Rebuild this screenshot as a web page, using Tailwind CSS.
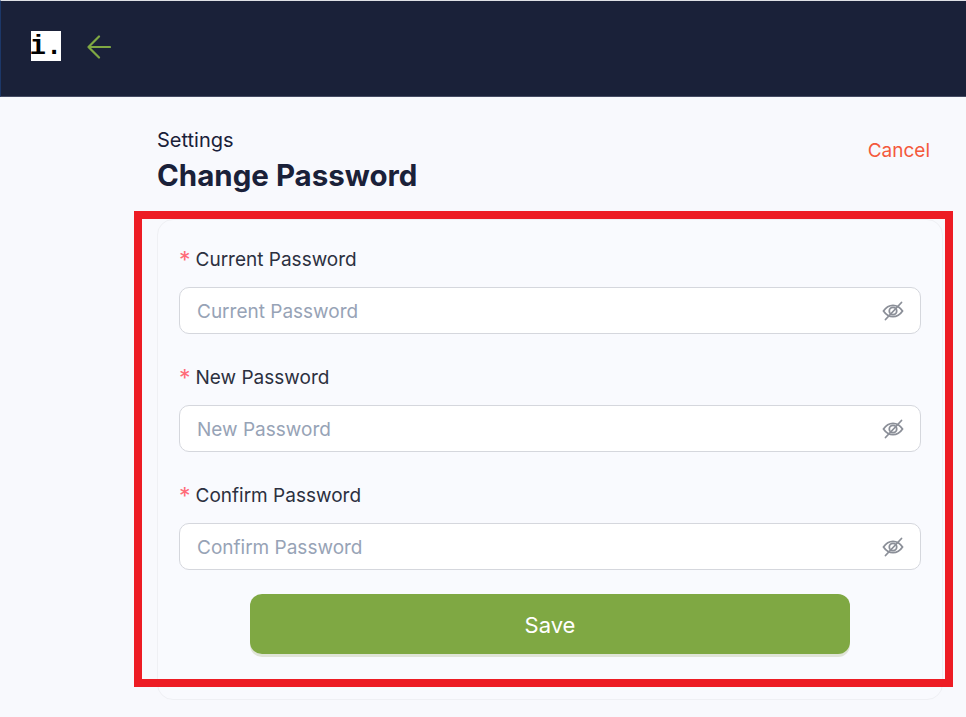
<!DOCTYPE html>
<html lang="en">
<head>
  <meta charset="UTF-8" />
  <title>Change Password</title>
  <script src="https://cdn.jsdelivr.net/npm/@tailwindcss/browser@4"></script>
</head>
<body class="relative h-[717px] w-[966px] overflow-hidden bg-[#f8f9fd] font-['Inter',sans-serif]">

  <header class="flex h-[97px] items-start border-t border-l border-b border-t-[#dfe1e6] border-l-[#1c3768] border-b-[#454b63] bg-[#1a2139] pt-[30px] pl-[30px]">
    <div class="flex h-[30px] w-[30px] items-end justify-center bg-white font-['Liberation_Mono',monospace] text-[27px] leading-[27px] font-bold text-black">i.</div>
    <svg class="mt-[4px] ml-[26px] h-6 w-6 text-[#7fa843]" viewBox="0 0 24 24" fill="none" stroke="currentColor" stroke-width="2.200" stroke-linecap="round" stroke-linejoin="round">
      <path d="M23 12H1.500M12 1.500 1.500 12 12 22.500" />
    </svg>
  </header>

  <main class="pt-[29px] pr-[23px] pl-[157px]">
    <div class="flex items-start justify-between">
      <div>
        <p class="text-[20px] leading-[28px] text-[#1a2139]">Settings</p>
        <h1 class="text-[29.500px] leading-[43px] font-bold text-[#1a2139]">Change Password</h1>
      </div>
      <a href="#" class="mt-[11px] mr-[13px] text-[19px] leading-[28px] text-[#f4593c]">Cancel</a>
    </div>

    <form class="mt-[22px] flex h-[481px] flex-col rounded-2xl border border-[#eff0f4] bg-[#f9fafe] px-[21px] pt-[25px]">
      <div class="flex flex-col gap-[14px]">
        <label class="flex h-[28px] items-center pt-[2px] text-[19px] text-[#2c3040]"><span class="mr-[5px] text-[23px] leading-[28px] text-[#ff6b78]">*</span>Current Password</label>
        <div class="flex h-[47px] items-center justify-between rounded-[10px] border border-[#d5d7dd] bg-white pr-[16px] pl-[17px]">
          <input class="mt-[4px] w-[500px] bg-transparent text-[19px] outline-none placeholder:text-[#97a3b6]" placeholder="Current Password" />
          <svg class="h-[22px] w-[22px] text-[#8b8f98]" viewBox="0 0 22 22" fill="none" stroke="currentColor" stroke-width="1.800" stroke-linecap="round"><path d="M1.500 11C4 7.200 7.200 5.300 11 5.300s7 1.900 9.500 5.700c-2.500 3.800-5.700 5.700-9.500 5.700S4 14.800 1.500 11Z" /><circle cx="11" cy="11" r="3.700" /><path d="M19.500 2.500 3.500 19.500" /></svg>
        </div>
      </div>
      <div class="mt-[29px] flex flex-col gap-[14px]">
        <label class="flex h-[28px] items-center pt-[2px] text-[19px] text-[#2c3040]"><span class="mr-[5px] text-[23px] leading-[28px] text-[#ff6b78]">*</span>New Password</label>
        <div class="flex h-[47px] items-center justify-between rounded-[10px] border border-[#d5d7dd] bg-white pr-[16px] pl-[17px]">
          <input class="mt-[4px] w-[500px] bg-transparent text-[19px] outline-none placeholder:text-[#97a3b6]" placeholder="New Password" />
          <svg class="h-[22px] w-[22px] text-[#8b8f98]" viewBox="0 0 22 22" fill="none" stroke="currentColor" stroke-width="1.800" stroke-linecap="round"><path d="M1.500 11C4 7.200 7.200 5.300 11 5.300s7 1.900 9.500 5.700c-2.500 3.800-5.700 5.700-9.500 5.700S4 14.800 1.500 11Z" /><circle cx="11" cy="11" r="3.700" /><path d="M19.500 2.500 3.500 19.500" /></svg>
        </div>
      </div>
      <div class="mt-[29px] flex flex-col gap-[14px]">
        <label class="flex h-[28px] items-center pt-[2px] text-[19px] text-[#2c3040]"><span class="mr-[5px] text-[23px] leading-[28px] text-[#ff6b78]">*</span>Confirm Password</label>
        <div class="flex h-[47px] items-center justify-between rounded-[10px] border border-[#d5d7dd] bg-white pr-[16px] pl-[17px]">
          <input class="mt-[4px] w-[500px] bg-transparent text-[19px] outline-none placeholder:text-[#97a3b6]" placeholder="Confirm Password" />
          <svg class="h-[22px] w-[22px] text-[#8b8f98]" viewBox="0 0 22 22" fill="none" stroke="currentColor" stroke-width="1.800" stroke-linecap="round"><path d="M1.500 11C4 7.200 7.200 5.300 11 5.300s7 1.900 9.500 5.700c-2.500 3.800-5.700 5.700-9.500 5.700S4 14.800 1.500 11Z" /><circle cx="11" cy="11" r="3.700" /><path d="M19.500 2.500 3.500 19.500" /></svg>
        </div>
      </div>
      <button type="button" class="mx-auto mt-[24px] h-[60px] w-[600px] rounded-[12px] bg-[#7fa843] pt-[2px] text-[22px] text-white shadow-[0_3px_0_#e0e4d8]">Save</button>
    </form>
  </main>

  <!-- annotation box over the form -->
  <div class="pointer-events-none absolute top-[211px] left-[134px] h-[476px] w-[819px] border-[8px] border-[#ed1c24]"></div>
</body>
</html>
